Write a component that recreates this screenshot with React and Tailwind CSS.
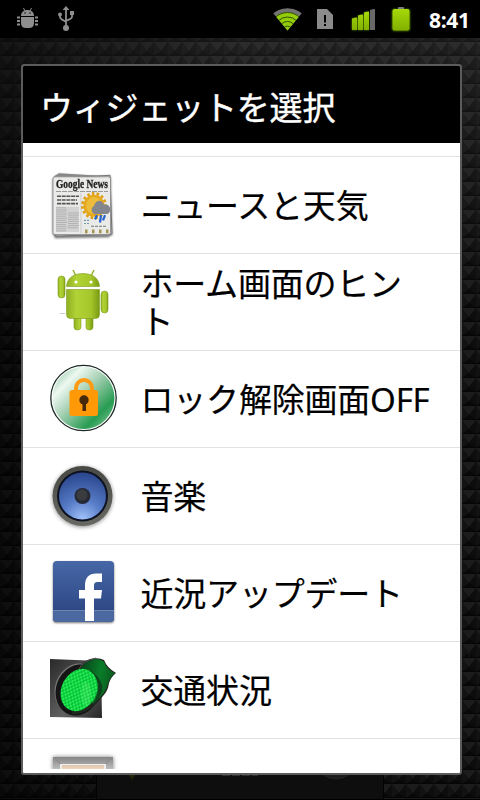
import React from "react";

const cjk = "font-['Noto_Sans','Noto_Sans_CJK_JP',sans-serif]";

function Backdrop() {
  return (
    <svg className="absolute inset-0" width="480" height="800">
      <defs>
        <pattern id="studs" width="14" height="14" patternUnits="userSpaceOnUse">
          <rect width="14" height="14" fill="#0b0b0b" />
          <path d="M0 0H14L7 9Z" fill="#1c1c1c" />
          <path d="M0 0L7 9L0 14Z" fill="#121212" />
          <path d="M14 0L7 9L14 14Z" fill="#0d0d0d" />
          <path d="M0 14L7 9L14 14Z" fill="#080808" />
          <path d="M0 13.500H14" stroke="#060606" />
        </pattern>
        <linearGradient id="glow" x1="0" y1="0" x2="0" y2="1">
          <stop offset="0" stopColor="#fff" stopOpacity=".08" />
          <stop offset=".4" stopColor="#fff" stopOpacity="0" />
        </linearGradient>
        <linearGradient id="leftFade">
          <stop offset="0" stopColor="#000" stopOpacity=".5" />
          <stop offset=".5" stopColor="#000" stopOpacity="0" />
        </linearGradient>
      </defs>
      <rect width="480" height="800" fill="url(#studs)" />
      <rect width="480" height="800" fill="url(#glow)" />
      <rect width="480" height="800" fill="url(#leftFade)" />
      <rect x="96" y="765" width="288" height="35" fill="#0e0e0e" />
      <path d="M96.500 765V800M383.500 765V800" stroke="#030303" />
      <path d="M128 774h8l-4 6Z" fill="#22260b" />
      <path d="M222 775h36" stroke="#303030" strokeWidth="2" strokeDasharray="8 2" />
      <path d="M322 774q14 10 28 0" fill="#1c1c1c" stroke="#242424" />
      <path d="M463 649h6v8m-5 6h5" fill="none" stroke="#1b1b1b" />
      <path d="M0 799.500H480" stroke="#000" />
    </svg>
  );
}

function StatusBar() {
  return (
    <div className="relative flex h-[38px] bg-black">
      <svg width="420" height="38">
        <defs>
          <linearGradient id="lime" x1="0" y1="0" x2="0" y2="1">
            <stop offset="0" stopColor="#a6d908" />
            <stop offset="1" stopColor="#82b000" />
          </linearGradient>
          <filter id="halo" x="-30%" y="-30%" width="160%" height="160%">
            <feGaussianBlur stdDeviation="1.3" />
          </filter>
          <clipPath id="wifiClip"><path d="M287.500 30.500L273 13C280 6.500 295 6.500 302 13Z" /></clipPath>
        </defs>
        <g fill="#8e8e8e">
          <path d="M21 16c0-4 3-6 6.500-6s6.500 2 6.500 6Z" />
          <path d="M21 17h13v6q0 5-5 5h-3q-5 0-5-5Z" />
          <path d="M23.500 8l1.500 3M31.500 8l-1.500 3" stroke="#8e8e8e" />
          <path d="M17 17.500h3M17 21h3M17 24.500h3M35 17.500h3M35 21h3M35 24.500h3" stroke="#8e8e8e" strokeWidth="1.800" />
          <path d="M24 12.500h2v1h-2zM29 12.500h2v1h-2z" fill="#222" />
          <path d="M66 6l3.500 4h-7Z" />
          <circle cx="66" cy="28" r="3" />
          <circle cx="60" cy="14.500" r="2" />
          <path d="M70 11h4v4h-4z" />
          <path d="M66 8v20M60 14v3c0 2 3 3 6 5M72 14v3c0 2-3 2-6 4" fill="none" stroke="#8e8e8e" strokeWidth="1.800" />
        </g>
        <g clipPath="url(#wifiClip)">
          <circle cx="287.500" cy="30" r="22" fill="#737373" />
          <circle cx="287.500" cy="30" r="17.500" fill="#93cc0b" />
          <g fill="none" stroke="#335000" strokeWidth="1">
            <circle cx="287.500" cy="30" r="17.500" /><circle cx="287.500" cy="30" r="13" />
            <circle cx="287.500" cy="30" r="8.500" /><circle cx="287.500" cy="30" r="4" />
          </g>
        </g>
        <path d="M317 9h10l6 6v14h-16Z" fill="#8b8b8b" />
        <path d="M325 15v7.500M325 24v2" stroke="#000" strokeWidth="2" />
        <path d="M352 18.500h5V30h-5zM358 15.500h5V30h-5zM364 12.500h5V30h-5z" fill="#639000" filter="url(#halo)" />
        <path d="M352 18.500q2.500-1 5-1V30h-5zM358 15.500q2.500-1 5-1V30h-5zM364 12.500q2.500-1 5-1V30h-5z" fill="url(#lime)" />
        <path d="M370 10q2.500-1 5-1v21h-5z" fill="#686868" />
        <rect x="392" y="9" width="18" height="22" rx="2" fill="#527b00" filter="url(#halo)" />
        <rect x="398" y="7" width="6" height="4" rx="1" fill="#777b80" />
        <rect x="392.500" y="9" width="17" height="21.500" rx="2" fill="url(#lime)" />
      </svg>
      <span className="ml-[9px] mt-[5px] font-['Open_Sans',sans-serif] text-[21px] leading-[30px] font-bold tracking-[-0.35px] text-white">8:41</span>
    </div>
  );
}

function NewsIcon() {
  return (
    <svg width="72" height="72" className="overflow-visible drop-shadow-[0_1px_1px_#0008]">
      <g transform="translate(-1 1) scale(1 1.050)">
        <path d="M7 6L12 3L61 6L65 59L62 63L8 64L6 58Z" fill="#888" />
        <path d="M7 8L63 5L65 61L9 63Z" fill="#bbb" stroke="#666" strokeWidth=".8" />
        <rect x="6" y="6.500" width="57.500" height="55" rx="2" fill="#eaeae8" stroke="#888" strokeWidth=".8" />
        <text x="9" y="17.500" textLength="52" lengthAdjust="spacingAndGlyphs" className="font-['Liberation_Serif',serif] text-[11px] font-bold" fill="#222" stroke="#222" strokeWidth=".3">Google News</text>
        <path d="M9 20.500h52" stroke="#999" strokeDasharray="5 1" />
        <path d="M10 25h22M10 28.500h20M10 32h21" stroke="#555" strokeWidth="1.500" strokeDasharray="4 .7" />
        <rect x="9" y="35" width="23" height="24" fill="#d2d2d2" />
        <path d="M9 36h10M9 38h11M9 40h10M9 42h11M9 44h10M9 46h11M9 48h10M9 50h11M9 52h10M9 54h11M9 56h10M9 58h10M21 41h11M21 43h11M21 45h10M21 47h11M21 49h11M21 51h10M21 53h11M21 55h10" stroke="#aaa" strokeWidth=".8" />
        <path d="M34 22v38" stroke="#ccc" />
        <circle cx="47" cy="34" r="11.500" fill="none" stroke="#dda018" strokeWidth="3" strokeDasharray="2.600 2.100" />
        <circle cx="47" cy="34" r="10.500" fill="#e5a81f" />
        <circle cx="47" cy="34" r="8" fill="#edbc3a" />
        <path d="M47 42a4.500 4.500 0 0 1 0-8c2-6 8-6 10-1 4-1 7 2 6 6q-1 3-4 3Z" fill="#83868c" />
        <path d="M50 43l-2 4M54 43l-1 7M58 43l-2 5" stroke="#2864cc" strokeWidth="2.300" />
        <path d="M37 48h5M37 51h5" stroke="#749caf" strokeDasharray="2 1" />
        <path d="M44 53.500h15" stroke="#777" strokeDasharray="3 1" />
        <path d="M38 58.500h24" stroke="#a39453" strokeWidth="3.500" strokeDasharray="2.500 4.500" />
      </g>
    </svg>
  );
}

function RobotIcon() {
  return (
    <svg width="72" height="72">
      <defs>
        <linearGradient id="robot">
          <stop offset="0" stopColor="#8eaf22" /><stop offset=".3" stopColor="#b2d336" />
          <stop offset=".75" stopColor="#a4c62a" /><stop offset="1" stopColor="#789a12" />
        </linearGradient>
      </defs>
      <g transform="translate(-1 -2)">
        <g fill="url(#robot)" stroke="#7d9c20" strokeWidth=".6">
          <path d="M26 6l3 6M47 6l-3 6" stroke="#94b22c" strokeWidth="1.500" />
          <path d="M19.500 22.500C20 13 28 9.500 36 9.500s16 3.500 16.500 13Z" />
          <path d="M19.500 25.500h33v25q0 4-4 4h-25q-4 0-4-4Z" />
          <rect x="11" y="12" width="7" height="22" rx="3.500" />
          <rect x="54" y="27" width="7" height="22" rx="3.500" />
          <path d="M27 54.500h7v8.500q0 3-3.500 3T27 63ZM39 54.500h7v8.500q0 3-3.500 3T39 63Z" />
        </g>
        <circle cx="29" cy="18" r="1.600" fill="#fff" /><circle cx="44" cy="18" r="1.600" fill="#fff" />
        <path d="M13 49.500h5" stroke="#ccc" />
      </g>
    </svg>
  );
}

function LockIcon() {
  return (
    <svg width="72" height="72">
      <defs>
        <linearGradient id="green" x1=".1" y1=".1" x2=".9" y2=".9">
          <stop offset="0" stopColor="#a5d3b6" /><stop offset=".18" stopColor="#edf8f1" />
          <stop offset=".45" stopColor="#a5d0b3" /><stop offset=".82" stopColor="#289c53" />
          <stop offset="1" stopColor="#68b983" />
        </linearGradient>
      </defs>
      <circle cx="35.500" cy="35" r="32.700" fill="#fff" stroke="#1d2b25" strokeWidth="1.300" />
      <circle cx="35.500" cy="35" r="31" fill="url(#green)" />
      <path d="M28 29v-4a8 8 0 0 1 16 0v4" fill="none" stroke="#ff9b13" strokeWidth="4" />
      <rect x="21.500" y="27" width="28.500" height="26" rx="2.500" fill="#ff9908" />
      <circle cx="36" cy="37" r="4.700" fill="#45290a" />
      <path d="M34.500 39h3.500v9h-3.500z" fill="#45290a" />
    </svg>
  );
}

function SpeakerIcon() {
  return (
    <svg width="72" height="72" className="drop-shadow-[0_1px_2px_#0007]">
      <defs>
        <radialGradient id="cone" cx=".5" cy="1" r=".95">
          <stop offset="0" stopColor="#a3c4fb" /><stop offset=".45" stopColor="#587cc8" /><stop offset="1" stopColor="#2d4a91" />
        </radialGradient>
        <linearGradient id="rim" x1="0" y1="0" x2="0" y2="1"><stop stopColor="#484844" /><stop offset="1" stopColor="#696963" /></linearGradient>
      </defs>
      <circle cx="34.500" cy="36" r="30" fill="url(#rim)" />
      <circle cx="34.500" cy="36" r="25.500" fill="#0d1220" />
      <circle cx="34.500" cy="36" r="23.500" fill="url(#cone)" />
      <circle cx="34.500" cy="36" r="8" fill="#252a34" />
      <circle cx="34" cy="35" r="5.500" fill="#3a3c40" />
    </svg>
  );
}

function FacebookIcon() {
  return (
    <svg width="72" height="72" className="drop-shadow-[0_1px_1px_#0008]">
      <defs><linearGradient id="fb" x1="0" y1="0" x2="0" y2="1"><stop stopColor="#4767a6" /><stop offset="1" stopColor="#29417e" /></linearGradient></defs>
      <rect x="5" y="4" width="61" height="61" rx="4" fill="url(#fb)" />
      <path d="M5 53.500h61V61q0 4-4 4H9q-4 0-4-4Z" fill="#4c68a1" />
      <path d="M5 53.500h61" stroke="#6d86b3" />
      <path d="M37 64V41.500h-6V33h6v-4.500c0-8 4-12 11-12h6V25h-4c-3 0-4 1-4 4v4h8l-1 8.500h-7V64Z" fill="#fff" />
    </svg>
  );
}

function TrafficIcon() {
  return (
    <svg width="72" height="72">
      <defs>
        <pattern id="dots" width="4" height="5" patternUnits="userSpaceOnUse">
          <rect width="4" height="5" fill="#07b837" /><circle cx="1" cy="1.200" r="1.300" fill="#24f253" /><circle cx="3" cy="3.700" r="1.300" fill="#24f253" />
        </pattern>
        <linearGradient id="box" x2="1" y2="1"><stop stopColor="#292929" /><stop offset=".6" stopColor="#606060" /><stop offset="1" stopColor="#252525" /></linearGradient>
        <linearGradient id="visor" x2="1" y2=".3"><stop stopColor="#063e18" /><stop offset=".6" stopColor="#0a7d29" /><stop offset="1" stopColor="#0a5a1e" /></linearGradient>
      </defs>
      <path d="M2 5L53 7L54 64L2 63Z" fill="url(#box)" />
      <ellipse cx="29" cy="35" rx="22" ry="26" transform="rotate(20 29 35)" fill="#777" />
      <ellipse cx="30" cy="36" rx="22" ry="26" transform="rotate(20 30 36)" fill="#151515" />
      <path d="M31 15Q33 8 42 5Q51 3 56 6Q59 14 68 19Q63 23 61 29Q60 37 55 42Q50 49 42 55Q34 61 24 60Z" fill="#1e281e" />
      <path d="M33 14Q37 8 47 5Q53 5 56 8Q59 16 67 19Q62 23 60 29Q58 37 54 41L45 50Z" fill="url(#visor)" />
      <path d="M40 15Q58 31 44 51Q53 43 54 36Q56 25 40 15Z" fill="#102016" opacity=".6" />
      <ellipse cx="31" cy="36" rx="17.500" ry="22" transform="rotate(27 31 36)" fill="url(#dots)" />
      <ellipse cx="38" cy="40" rx="5" ry="12" fill="#86ff91" opacity=".2" />
      <path d="M31 15Q35 7 48 4" stroke="#555" fill="none" />
    </svg>
  );
}

function FrameIcon() {
  return (
    <svg width="72" height="32" className="drop-shadow-[0_0_2px_#0008]">
      <defs>
        <linearGradient id="metal" x1="0" y1="0" x2="0" y2="1"><stop stopColor="#858585" /><stop offset=".5" stopColor="#c9c9c9" /></linearGradient>
        <linearGradient id="photo" x1="0" y1="0" x2="0" y2="1"><stop stopColor="#dfc5aa" /><stop offset=".5" stopColor="#f5e3cb" /></linearGradient>
      </defs>
      <rect x="5" y="18" width="60" height="30" rx="1" fill="url(#metal)" />
      <path d="M5 18l8 7M65 18l-8 7" stroke="#888" />
      <rect x="12" y="25" width="46" height="14" fill="#eee" />
      <rect x="14" y="26" width="42" height="14" fill="url(#photo)" />
    </svg>
  );
}

const rows = [
  { icon: NewsIcon, label: "ニュースと天気" },
  { icon: RobotIcon, label: "ホーム画面のヒント" },
  { icon: LockIcon, label: "ロック解除画面OFF" },
  { icon: SpeakerIcon, label: "音楽" },
  { icon: FacebookIcon, label: "近況アップデート" },
  { icon: TrafficIcon, label: "交通状況" },
];

export default function App() {
  return (
    <div className="relative h-[800px] w-[480px] overflow-hidden bg-black">
      <Backdrop />
      <StatusBar />
      <div className="relative mt-[26px] ml-[21px] flex h-[711px] w-[441px] flex-col overflow-hidden rounded-[3px] border-2 border-[#5b5b5b] bg-white">
        <h1 className={`${cjk} h-[77px] shrink-0 bg-black pl-[17px] text-[33px] leading-[83px] font-normal tracking-[-0.2px] whitespace-nowrap text-white [-webkit-text-stroke:0.4px_white]`}>
          ウィジェットを選択
        </h1>
        <div className="h-[14px] shrink-0 border-b border-[#e2e2e2]" />
        {rows.map(({ icon: Icon, label }) => (
          <div key={label} className="flex h-[97px] shrink-0 items-center border-b border-[#e2e2e2] pl-[25px]">
            <div className="h-[72px] w-[72px] shrink-0"><Icon /></div>
            <div className={`${cjk} ml-[20.5px] w-[292px] pt-[2px] text-[33px] leading-[38px] tracking-[-0.2px] break-all text-black [-webkit-text-stroke:0.2px_black]`}>{label}</div>
          </div>
        ))}
        <div className="h-[30px] shrink-0 overflow-hidden pl-[25px]"><FrameIcon /></div>
      </div>
    </div>
  );
}
